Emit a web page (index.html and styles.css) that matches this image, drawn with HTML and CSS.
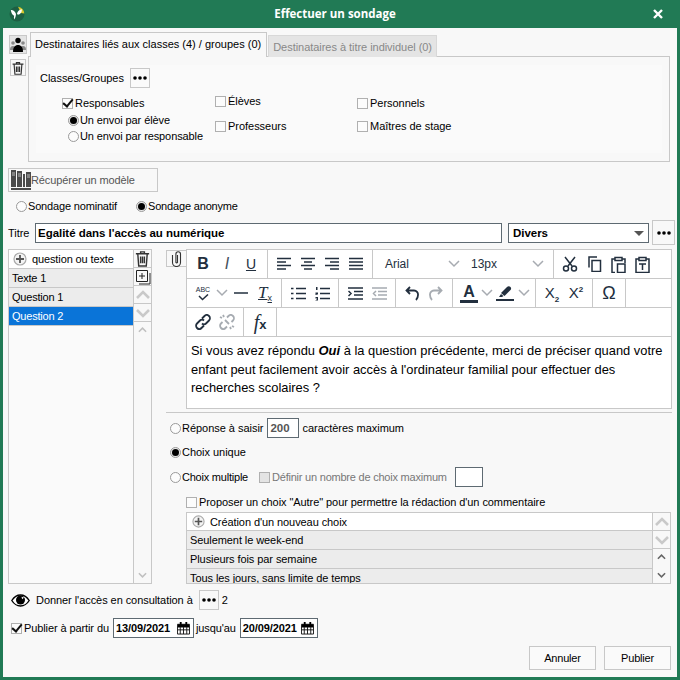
FILE: index.html
```html
<!DOCTYPE html>
<html lang="fr">
<head>
    <meta charset="UTF-8">
    <title>Effectuer un sondage</title>
    <link rel="stylesheet" href="styles.css">
</head>
<body>
    <svg class="defs" width="0" height="0">
        <defs>
            <symbol id="trash" viewBox="0 0 18 18"><path d="M2 4h14M7 4V2h4v2M4 4l1 13h8l1-13M7 7v7M9 7v7M11 7v7" fill="none" stroke="currentColor" stroke-width="1.500"/></symbol>
            <symbol id="dots" viewBox="0 0 18 6"><circle cx="4" cy="3" r="1.800"/><circle cx="9" cy="3" r="1.800"/><circle cx="14" cy="3" r="1.800"/></symbol>
            <symbol id="plus" viewBox="0 0 14 14"><circle cx="7" cy="7" r="6" fill="#f4f4f4" stroke="#aaa" stroke-width="1.200"/><path d="M7 3v8M3 7h8" stroke="#555" stroke-width="1.800"/></symbol>
            <symbol id="up" viewBox="0 0 14 10"><path d="M1 8l6-6 6 6" fill="none" stroke="currentColor" stroke-width="2.600"/></symbol>
            <symbol id="down" viewBox="0 0 14 10"><path d="M1 2l6 6 6-6" fill="none" stroke="currentColor" stroke-width="2.600"/></symbol>
            <symbol id="chev" viewBox="0 0 12 8"><path d="M1 1l5 5 5-5" fill="none" stroke="#a7abb1" stroke-width="1.500"/></symbol>
            <symbol id="cal" viewBox="0 0 14 14"><path d="M.5 3h13v10.500H.5zM.5 6h13M.5 9h13M3.500 6v7.500M7 6v7.500M10.500 6v7.500" fill="none" stroke="#111"/><path d="M3 .5h2v3H3zM9 .5h2v3H9zM1 3h12v3H1z"/></symbol>
        </defs>
    </svg>

    <div class="window">
        <header class="titlebar">
            <svg class="logo" width="16" height="16" viewBox="0 0 16 16">
                <circle cx="8" cy="8" r="7.500" fill="#1d5f43"/>
                <path d="M9 .8a7.500 7.500 0 0 1 6.300 6.800L12 7z" fill="#d5c92d"/>
                <path d="M1.800 4C4 3.800 6 5 7 8c-.2 2-.6 4-1.800 5.500C4.800 12 4.800 10.800 5.200 9.800 3.400 9 2.200 6.800 1.800 4z" fill="#fff"/>
                <path d="M8 7.500c.6-2 2-4 5-4.300C13 6 11.400 8.300 8.800 8.800 8.600 8.500 8.300 8 8 7.500z" fill="#fff"/>
            </svg>
            <span class="window-title">Effectuer un sondage</span>
            <svg class="close" width="10" height="10" viewBox="0 0 10 10"><path d="M1 1l8 8M9 1l-8 8" stroke="#fff" stroke-width="2.400"/></svg>
        </header>

        <div class="content">
            <div class="recipients">
                <div class="side-tools">
                    <span class="tool tool-people">
                        <svg width="16" height="15" viewBox="0 0 16 15">
                            <circle cx="3" cy="6" r="1.800" fill="#888"/><circle cx="13" cy="6" r="1.800" fill="#888"/>
                            <path d="M0 13c0-3 1-4 3-4s3 1 3 4zM10 13c0-3 1-4 3-4s3 1 3 4z" fill="#888"/>
                            <circle cx="8" cy="3.500" r="2.700"/><path d="M3 15c0-5 2-7 5-7s5 2 5 7z"/>
                        </svg>
                    </span>
                    <span class="tool tool-trash"><svg width="14" height="14"><use href="#trash"/></svg></span>
                </div>
                <div class="tabs-wrap">
                    <div class="tabs">
                        <span class="tab active">Destinataires liés aux classes (4) / groupes (0)</span>
                        <span class="tab">Destinataires à titre individuel (0)</span>
                    </div>
                    <div class="tab-panel">
                        <div class="panel-inner">
                            <div class="classes-row">
                                <span>Classes/Groupes</span>
                                <span class="more-btn"><svg width="18" height="6"><use href="#dots"/></svg></span>
                            </div>
                            <div class="who">
                                <div class="who-col col-first">
                                    <label class="opt"><span class="check on"></span>Responsables</label>
                                    <label class="opt sub first-sub"><span class="radio on"></span>Un envoi par élève</label>
                                    <label class="opt sub"><span class="radio"></span>Un envoi par responsable</label>
                                </div>
                                <div class="who-col col-second">
                                    <label class="opt"><span class="check"></span>Élèves</label>
                                    <label class="opt"><span class="check"></span>Professeurs</label>
                                </div>
                                <div class="who-col col-third">
                                    <label class="opt"><span class="check"></span>Personnels</label>
                                    <label class="opt"><span class="check"></span>Maîtres de stage</label>
                                </div>
                            </div>
                        </div>
                    </div>
                </div>
            </div>

            <div class="model-btn">
                <svg width="22" height="22" viewBox="0 0 22 22" fill="#4a4a4a">
                    <path d="M1 1h5v17H1zM7 2h5v16H7zM13 5h2v13h-2zM16 3h5v15h-5zM1 19h20v2H1z"/>
                    <path d="M2 4h3M2 6h3M8 5h3M8 7h3M17 6h3M17 8h3" stroke="#bbb"/>
                </svg>
                <span>Récupérer un modèle</span>
            </div>

            <div class="mode-row">
                <label class="opt"><span class="radio"></span>Sondage nominatif</label>
                <label class="opt"><span class="radio on"></span>Sondage anonyme</label>
            </div>

            <div class="title-row">
                <span class="title-label">Titre</span>
                <div class="field title-input">Egalité dans l'accès au numérique</div>
                <div class="field category">Divers<span class="caret"></span></div>
                <span class="more-btn more-big"><svg width="18" height="6"><use href="#dots"/></svg></span>
            </div>

            <div class="main-row">
                <div class="question-list">
                    <div class="q-rows">
                        <div class="q-row q-add"><svg width="14" height="14"><use href="#plus"/></svg>question ou texte</div>
                        <div class="q-row">Texte 1</div>
                        <div class="q-row">Question 1</div>
                        <div class="q-row selected">Question 2</div>
                    </div>
                    <div class="q-tools">
                        <span class="q-tool"><svg width="17" height="17"><use href="#trash"/></svg></span>
                        <span class="q-tool">
                            <svg width="16" height="16" viewBox="0 0 16 16" fill="none" stroke="#222"><path d="M1.500 1.500h11v11h-11zM15 4v11H4M4 7h6M7 4v6"/></svg>
                        </span>
                        <span class="q-tool arrow"><svg width="14" height="10"><use href="#up"/></svg></span>
                        <span class="q-tool arrow"><svg width="14" height="10"><use href="#down"/></svg></span>
                        <div class="scrollbar">
                            <svg width="9" height="6"><use href="#up"/></svg>
                            <svg width="9" height="6"><use href="#down"/></svg>
                        </div>
                    </div>
                </div>

                <div class="question-edit">
                    <div class="editor-row">
                        <span class="clip">
                            <svg width="11" height="16" viewBox="0 0 11 16" fill="none" stroke="#333" stroke-width="1.100"><path d="M1.500 4v7.500a4 4 0 0 0 8 0V3a2.300 2.300 0 0 0-4.600 0v8.500a1 1 0 0 0 1.600 0V4"/></svg>
                        </span>
                        <div class="editor">
                            <div class="tb-row">
                                <div class="tb-group">
                                    <span class="tb tb-b">B</span><span class="tb tb-i">I</span><span class="tb tb-u">U</span>
                                </div>
                                <div class="tb-group">
                                    <span class="tb"><svg width="16" height="14" viewBox="0 0 16 14"><path class="ic" d="M1 1.500h14M1 5h9M1 8.500h14M1 12h9"/></svg></span>
                                    <span class="tb"><svg width="16" height="14" viewBox="0 0 16 14"><path class="ic" d="M1 1.500h14M4 5h8M1 8.500h14M4 12h8"/></svg></span>
                                    <span class="tb"><svg width="16" height="14" viewBox="0 0 16 14"><path class="ic" d="M1 1.500h14M6 5h9M1 8.500h14M6 12h9"/></svg></span>
                                    <span class="tb"><svg width="16" height="14" viewBox="0 0 16 14"><path class="ic" d="M1 1.500h14M1 5h14M1 8.500h14M1 12h14"/></svg></span>
                                </div>
                                <div class="tb-group tb-fonts">
                                    <span class="tb-select sel-font">Arial<svg width="12" height="8"><use href="#chev"/></svg></span>
                                    <span class="tb-select sel-size">13px<svg width="12" height="8"><use href="#chev"/></svg></span>
                                </div>
                                <div class="tb-group tb-last">
                                    <span class="tb"><svg width="16" height="16" viewBox="0 0 16 16"><path class="ic" d="M3 1l7 9M13 1L6 10"/><circle class="ic" cx="4" cy="12.500" r="2.500"/><circle class="ic" cx="12" cy="12.500" r="2.500"/></svg></span>
                                    <span class="tb"><svg width="15" height="16" viewBox="0 0 15 16"><path class="ic" d="M5 4.500h8.500v11H5zM2 11.500V1h8"/></svg></span>
                                    <span class="tb"><svg width="15" height="17" viewBox="0 0 15 17"><path class="ic" d="M4 3H1v13.500h3M11 3h3v4M4 1.500h7v3H4zM6.500 8h7.500v8.500H6.500z"/></svg></span>
                                    <span class="tb"><svg width="15" height="17" viewBox="0 0 15 17"><path class="ic" d="M4 3H1v13.500h13V3h-3M4 1.500h7v3H4zM4 8h7M7.500 8v6"/></svg></span>
                                </div>
                            </div>
                            <div class="tb-row">
                                <div class="tb-group">
                                    <span class="tb tb-spell">ABC<svg width="13" height="7" viewBox="0 0 13 7"><path class="ic" d="M2 2l3.500 3.500L11 .5"/></svg></span>
                                    <span class="tb-chev"><svg width="12" height="8"><use href="#chev"/></svg></span>
                                    <span class="tb"><svg width="14" height="4"><path class="ic" d="M0 2h14"/></svg></span>
                                    <span class="tb tb-clear">T<small>x</small></span>
                                </div>
                                <div class="tb-group">
                                    <span class="tb"><svg width="15" height="13" viewBox="0 0 15 13"><path class="ic" d="M5 1.500h10M5 6.500h10M5 11.500h10M0 1.500h2.500M0 6.500h2.500M0 11.500h2.500"/></svg></span>
                                    <span class="tb"><svg width="15" height="15" viewBox="0 0 15 15"><path class="ic" d="M5 2.500h10M5 7.500h10M5 12.500h10"/><path d="M1 1h1.500v3H1zM.5 6.500H3V8H1.500v.5H3V9H.5zM.5 11H3v3.500H.5V14H2v-.5H1V13h1v-.5H.5z" fill="#222f3e"/></svg></span>
                                </div>
                                <div class="tb-group">
                                    <span class="tb"><svg width="15" height="13" viewBox="0 0 15 13"><path class="ic" d="M0 1h15M6 4.500h9M6 8h9M0 12h15M.5 4l2.500 2.500L.5 9"/></svg></span>
                                    <span class="tb faded"><svg width="15" height="13" viewBox="0 0 15 13"><path class="ic" d="M0 1h15M6 4.500h9M6 8h9M0 12h15M4 4L1.500 6.500 4 9"/></svg></span>
                                </div>
                                <div class="tb-group">
                                    <span class="tb"><svg width="14" height="15" viewBox="0 0 14 15"><path class="ic thick" d="M5 1L1.500 4.500 5 8M1.500 4.500H9a4 4 0 0 1 4 4.500c0 3-1 4-2 5"/></svg></span>
                                    <span class="tb faded"><svg width="14" height="15" viewBox="0 0 14 15"><path class="ic thick" d="M9 1l3.500 3.500L9 8M12.500 4.500H5a4 4 0 0 0-4 4.500c0 3 1 4 2 5"/></svg></span>
                                </div>
                                <div class="tb-group">
                                    <span class="tb tb-color">A</span>
                                    <span class="tb-chev narrow"><svg width="12" height="8"><use href="#chev"/></svg></span>
                                    <span class="tb"><svg width="18" height="16" viewBox="0 0 18 16"><path d="M5 8l6-6c1-1 2.500-1 3.500 0s.5 2.500 0 3l-6 6z" fill="#222f3e"/><path d="M5 9l-2 3 3 0 1.500-1z" fill="#222f3e"/><path d="M0 14h18v2H0z" fill="#222f3e"/></svg></span>
                                    <span class="tb-chev"><svg width="12" height="8"><use href="#chev"/></svg></span>
                                </div>
                                <div class="tb-group">
                                    <span class="tb tb-script">X<sub>2</sub></span>
                                    <span class="tb tb-script">X<sup>2</sup></span>
                                </div>
                                <div class="tb-group">
                                    <span class="tb tb-omega">Ω</span>
                                </div>
                            </div>
                            <div class="tb-row">
                                <div class="tb-group">
                                    <span class="tb"><svg width="16" height="16" viewBox="0 0 16 16"><path class="ic thick" d="M7 4.500l2.500-2.500a2.800 2.800 0 0 1 4.500 4.500L11 9.500a2.800 2.800 0 0 1-4 0M9 11.500L6.500 14A2.800 2.800 0 0 1 2 9.500L5 6.500a2.800 2.800 0 0 1 4 0"/></svg></span>
                                    <span class="tb faded"><svg width="16" height="16" viewBox="0 0 16 16"><path class="ic thick" d="M8 3.500l1.500-1.500a2.800 2.800 0 0 1 4.500 4.500L12.500 8M8 12.500L6.500 14A2.800 2.800 0 0 1 2 9.500L3.500 8M6 6l4 4M1 3l2 1M4 1l1 2M15 13l-2-1M12 15l-1-2"/></svg></span>
                                </div>
                                <div class="tb-group">
                                    <span class="tb tb-fx">f<b>x</b></span>
                                </div>
                            </div>
                            <div class="editor-text">Si vous avez répondu <em>Oui</em> à la question précédente, merci de préciser quand votre<br>enfant peut facilement avoir accès à l'ordinateur familial pour effectuer des<br>recherches scolaires ?</div>
                        </div>
                    </div>

                    <div class="answer-type">
                        <div class="answer-row row-text">
                            <label class="opt"><span class="radio"></span>Réponse à saisir</label>
                            <div class="field count">200</div>
                            <span>caractères maximum</span>
                        </div>
                        <div class="answer-row row-single">
                            <label class="opt"><span class="radio on"></span>Choix unique</label>
                        </div>
                        <div class="answer-row row-multi">
                            <label class="opt"><span class="radio"></span>Choix multiple</label>
                            <label class="opt disabled"><span class="check"></span>Définir un nombre de choix maximum</label>
                            <div class="field max-count"></div>
                        </div>
                        <div class="choices">
                            <label class="opt other"><span class="check blank"></span>Proposer un choix "Autre" pour permettre la rédaction d'un commentaire</label>
                            <div class="choice-list">
                                <div class="choice-rows">
                                    <div class="choice add"><svg width="13" height="13"><use href="#plus"/></svg>Création d'un nouveau choix</div>
                                    <div class="choice">Seulement le week-end</div>
                                    <div class="choice">Plusieurs fois par semaine</div>
                                    <div class="choice">Tous les jours, sans limite de temps</div>
                                </div>
                                <div class="choice-tools">
                                    <span class="q-tool arrow"><svg width="14" height="10"><use href="#up"/></svg></span>
                                    <span class="q-tool arrow"><svg width="14" height="10"><use href="#down"/></svg></span>
                                    <div class="scrollbar dark">
                                        <svg width="9" height="6"><use href="#up"/></svg>
                                        <svg width="9" height="6"><use href="#down"/></svg>
                                    </div>
                                </div>
                            </div>
                        </div>
                    </div>
                </div>
            </div>

            <div class="access-row">
                <svg width="19" height="13" viewBox="0 0 19 13">
                    <path d="M.8 6.500C3 3 6 1 9.500 1s6.500 2 8.700 5.500C16 10 13 12 9.500 12S3 10 .8 6.500z" fill="#fff" stroke="#000" stroke-width="1.400"/>
                    <circle cx="9.500" cy="6" r="4.500"/><path d="M10.500 2.800l2.500.8-1.800 1.700z" fill="#fff"/>
                </svg>
                <span class="access-label">Donner l'accès en consultation à</span>
                <span class="more-btn"><svg width="18" height="6"><use href="#dots"/></svg></span>
                <span>2</span>
            </div>

            <div class="publish-row">
                <label class="opt"><span class="check on"></span>Publier à partir du</label>
                <div class="field date date-from">13/09/2021<svg width="13" height="14"><use href="#cal"/></svg></div>
                <span class="until">jusqu'au</span>
                <div class="field date">20/09/2021<svg width="13" height="14"><use href="#cal"/></svg></div>
            </div>

            <footer class="actions">
                <span class="btn">Annuler</span>
                <span class="btn">Publier</span>
            </footer>
        </div>
    </div>
</body>
</html>
```

FILE: styles.css
```css
* {
    margin: 0;
    padding: 0;
    box-sizing: border-box;
}

body {
    width: 680px;
    height: 680px;
    overflow: hidden;
    font-family: 'Liberation Sans', Arial, sans-serif;
    font-size: 11px;
    letter-spacing: -0.03px;
    color: #000;
}

.defs {
    display: block;
    height: 0;
}

.window {
    display: flex;
    flex-direction: column;
    height: 680px;
    background: #217a55;
    padding: 0 3px 3px;
}

.titlebar {
    display: flex;
    align-items: center;
    height: 28px;
    padding: 0 14px 1px 6px;
    color: #fff;
}

.window-title {
    flex: 1;
    text-align: center;
    font-family: 'Open Sans', sans-serif;
    font-weight: 700;
    font-size: 11.5px;
    letter-spacing: 0;
    padding-right: 8px;
}

.content {
    flex: 1;
    background: #f8f8f8;
    padding: 4px 5px 0;
}

/* top block */
.recipients {
    display: flex;
    height: 130px;
}

.side-tools {
    width: 20px;
    padding-left: 1px;
}

.tool {
    display: flex;
    align-items: center;
    justify-content: center;
    border: 1px solid #c8c8c8;
}

.tool-people {
    width: 18px;
    height: 19px;
    margin-top: 3px;
    background: #e4e4e4;
}

.tool-trash {
    width: 16px;
    height: 17px;
    margin: 5px 0 0 1px;
    color: #333;
}

.tabs-wrap {
    flex: 1;
    margin-right: 2px;
}

.tabs {
    display: flex;
    align-items: flex-end;
    height: 25px;
    padding-left: 2px;
    position: relative;
    z-index: 1;
}

.tab {
    height: 22px;
    line-height: 22px;
    padding: 0 4px;
    margin-right: 1px;
    background: #e4e4e4;
    border: 1px solid #d8d8d8;
    border-bottom: 0;
    color: #888;
    letter-spacing: -0.04px;
}

.tab.active {
    height: 25px;
    line-height: 23px;
    padding: 0 5px 0 4px;
    margin-right: 1px;
    background: #f8f8f8;
    border-color: #c8c8c8;
    color: #000;
    letter-spacing: 0;
}

.tab-panel {
    height: 106px;
    margin-top: -1px;
    border: 1px solid #c8c8c8;
    padding: 8px 7px;
}

.panel-inner {
    height: 88px;
    background: #fafafa;
    padding: 3px 4px;
}

.classes-row {
    display: flex;
    align-items: center;
    gap: 6px;
    height: 20px;
}

.more-btn {
    flex: none;
    display: inline-flex;
    align-items: center;
    justify-content: center;
    width: 20px;
    height: 20px;
    border: 1px solid #c8c8c8;
    color: #111;
}

.more-big {
    width: 23px;
    height: 25px;
}

.opt {
    display: flex;
    align-items: center;
    height: 14px;
    white-space: nowrap;
}

.check,
.radio {
    flex: none;
    display: inline-flex;
    align-items: center;
    justify-content: center;
    width: 11px;
    height: 11px;
    margin-right: 2px;
    border: 1px solid #b0b0b0;
    background: #fcfcfc;
}

.check.on::after {
    content: '';
    width: 4px;
    height: 8px;
    margin: -3px 0 0 1px;
    border: solid #111;
    border-width: 0 2px 2px 0;
    transform: rotate(40deg);
}

.radio {
    margin-right: 1px;
    border-radius: 50%;
    border-color: #9a9a9a;
}

.radio.on {
    background: #e8e8e8;
}

.radio.on::after {
    content: '';
    width: 7px;
    height: 7px;
    border-radius: 50%;
    background: #000;
}

.who {
    display: flex;
    padding-top: 7px;
}

.col-first {
    width: 153px;
    margin-top: 1px;
    margin-left: 22px;
}

.sub {
    margin-left: 6px;
    letter-spacing: -0.1px;
}

.first-sub {
    margin: 3px 0 2px 6px;
}

.col-second {
    width: 142px;
    margin-top: -1px;
}

.col-second .opt + .opt {
    margin-top: 11px;
}

.col-third {
    margin-top: 1px;
}

.col-third .opt + .opt {
    margin-top: 9px;
}

/* model and mode */
.model-btn {
    display: flex;
    align-items: center;
    width: 150px;
    height: 24px;
    margin-top: 6px;
    padding-left: 1px;
    border: 1px solid #c8c8c8;
    color: #555;
    letter-spacing: -0.1px;
}

.model-btn span {
    margin-left: -1px;
}

.mode-row {
    display: flex;
    margin-top: 7px;
    padding-left: 8px;
    letter-spacing: -0.17px;
}

.mode-row .opt:first-child {
    width: 120px;
}

/* title */
.title-row {
    display: flex;
    align-items: center;
    height: 25px;
    margin-top: 7px;
}

.title-label {
    flex: none;
    width: 27px;
}

.field {
    flex: none;
    display: flex;
    align-items: center;
    border: 1px solid #5e6a72;
    background: #fff;
    font-weight: 700;
    font-size: 11.5px;
    padding: 0 2px;
}

.title-input {
    width: 467px;
    height: 20px;
    margin-right: 6px;
}

.category {
    position: relative;
    width: 141px;
    height: 20px;
    margin-right: 3px;
    padding-left: 4px;
}

.caret {
    position: absolute;
    right: 4px;
    top: 7px;
    border: 5px solid transparent;
    border-top-color: #555;
    border-bottom: 0;
}

/* question list */
.main-row {
    display: flex;
    height: 335px;
    margin-top: 4px;
}

.question-list {
    display: flex;
    width: 144px;
    margin-right: 14px;
    border: 1px solid #c8c8c8;
}

.q-rows {
    flex: 1;
    background: #fafafa;
}

.q-row {
    display: flex;
    align-items: center;
    height: 19px;
    padding-left: 3px;
    background: #ececec;
    border-bottom: 1px solid #c8c8c8;
    letter-spacing: -0.2px;
}

.q-add {
    background: #fff;
    padding-left: 4px;
    gap: 5px;
    letter-spacing: -0.12px;
}

.q-row.selected {
    background: #0a74d8;
    color: #fff;
}

.q-tools,
.choice-tools {
    display: flex;
    flex-direction: column;
    width: 18px;
    border-left: 1px solid #c8c8c8;
}

.q-tool {
    display: flex;
    align-items: center;
    justify-content: center;
    height: 18px;
    color: #333;
    border-bottom: 1px solid #c8c8c8;
}

.q-tool.arrow {
    color: #c9c9c9;
}

.scrollbar {
    flex: 1;
    display: flex;
    flex-direction: column;
    align-items: center;
    justify-content: space-between;
    padding: 5px 0;
    color: #c0c0c0;
}

.scrollbar.dark {
    color: #666;
}

/* editor */
.question-edit {
    flex: 1;
}

.editor-row {
    display: flex;
    height: 160px;
}

.clip {
    display: flex;
    align-items: center;
    justify-content: center;
    width: 20px;
    height: 17px;
    margin-top: 1px;
    border: 1px solid #c8c8c8;
    border-right: 0;
}

.editor {
    width: 486px;
    border: 1px solid #c8c8c8;
    background: #fff;
}

.tb-row {
    display: flex;
    height: 29px;
    border-bottom: 1px solid #c8c8c8;
}

.tb-group {
    display: flex;
    align-items: center;
    padding: 0 4px;
    border-right: 1px solid #c8c8c8;
}

.tb-last {
    border-right: 0;
}

.tb {
    display: flex;
    align-items: center;
    justify-content: center;
    width: 24px;
    color: #222f3e;
}

.tb-chev {
    display: flex;
    justify-content: center;
    width: 14px;
}

.tb-chev.narrow {
    width: 12px;
}

.ic {
    fill: none;
    stroke: #222f3e;
    stroke-width: 1.500;
}

.ic.thick {
    stroke-width: 1.800;
}

.faded {
    opacity: 0.4;
}

.tb-b,
.tb-i,
.tb-u {
    font-size: 16px;
    line-height: 20px;
}

.tb-b {
    font-weight: 700;
}

.tb-i {
    font-style: italic;
    color: #444f5c;
}

.tb-u {
    font-size: 14px;
    text-decoration: underline;
}

.tb-fonts {
    padding: 0 0 0 12px;
}

.tb-select {
    display: flex;
    align-items: center;
    justify-content: space-between;
    font-size: 12px;
    color: #222f3e;
}

.sel-font {
    width: 75px;
    margin-right: 11px;
}

.sel-size {
    width: 73px;
    margin-right: 9px;
}

.tb-spell {
    flex-direction: column;
    font-size: 7px;
    line-height: 8px;
}

.tb-clear {
    font-family: 'Liberation Serif', serif;
    font-style: italic;
    font-size: 17px;
    text-decoration: underline;
}

.tb-clear small {
    font-family: 'Liberation Sans', sans-serif;
    font-size: 9px;
    font-style: normal;
    align-self: flex-end;
}

.tb-color {
    font-size: 16px;
    font-weight: 700;
    border-bottom: 3px solid #222f3e;
    width: 18px;
    margin: 0 3px;
    line-height: 16px;
}

.tb-script {
    display: block;
    text-align: center;
    font-size: 15px;
    line-height: 20px;
}

.tb-script sub,
.tb-script sup {
    font-size: 8px;
    font-weight: 700;
    line-height: 0;
}

.tb-omega {
    font-size: 18px;
}

.tb-fx {
    font-family: 'Liberation Serif', serif;
    font-style: italic;
    font-size: 20px;
}

.tb-fx b {
    font-family: 'Liberation Sans', sans-serif;
    font-style: normal;
    font-size: 13px;
    align-self: flex-end;
    padding-bottom: 2px;
}

.editor-text {
    padding: 5px 4px;
    font-size: 12.9px;
    line-height: 18.5px;
    letter-spacing: 0;
}

.editor-text em {
    font-weight: 700;
    font-style: italic;
}

/* answer type */
.answer-type {
    margin-top: 3px;
    padding-left: 4px;
    border-top: 1px solid #c8c8c8;
}

.answer-row {
    display: flex;
    align-items: center;
    height: 20px;
}

.row-text {
    margin-top: 5px;
}

.row-text .field {
    margin: 0 3px 0 4px;
}

.count {
    width: 32px;
    height: 20px;
    padding-left: 2px;
    color: #555;
}

.row-single {
    margin-top: 4px;
}

.row-multi {
    margin-top: 5px;
    letter-spacing: -0.22px;
}

.disabled {
    margin-left: 11px;
    color: #777;
}

.disabled .check {
    background: #e4e4e4;
}

.max-count {
    width: 28px;
    height: 20px;
    margin-left: 8px;
}

.choices {
    padding-left: 16px;
}

.other {
    margin-top: 8px;
    letter-spacing: -0.07px;
}

.choice-list {
    display: flex;
    height: 72px;
    width: 485px;
    margin-top: 3px;
    border: 1px solid #c8c8c8;
    overflow: hidden;
    letter-spacing: -0.08px;
}

.choice-rows {
    flex: 1;
}

.choice {
    display: flex;
    align-items: center;
    height: 19px;
    padding-left: 3px;
    background: #ececec;
    border-bottom: 1px solid #c8c8c8;
}

.choice.add {
    height: 18px;
    background: #fff;
    padding-left: 5px;
    gap: 5px;
}

/* bottom rows */
.access-row {
    display: flex;
    align-items: center;
    height: 20px;
    margin-top: 6px;
    padding-left: 3px;
    letter-spacing: -0.06px;
}

.access-label {
    margin: 0 6px;
}

.access-row .more-btn {
    margin-right: 3px;
}

.publish-row {
    display: flex;
    align-items: center;
    gap: 3px;
    height: 20px;
    margin-top: 8px;
    padding-left: 3px;
    letter-spacing: -0.1px;
}

.publish-row .opt {
    margin-right: 1px;
}

.until {
    margin-left: -1px;
    margin-right: 1px;
}

.date {
    justify-content: space-between;
    width: 78px;
    height: 20px;
    font-size: 11px;
    padding: 0 3px 0 2px;
}

.date-from {
    width: 81px;
}

.actions {
    display: flex;
    justify-content: flex-end;
    gap: 8px;
    margin-top: 8px;
    padding-right: 1px;
    letter-spacing: -0.2px;
}

.btn {
    display: flex;
    align-items: center;
    justify-content: center;
    width: 67px;
    height: 24px;
    border: 1px solid #c8c8c8;
    background: #fafafa;
}
```
